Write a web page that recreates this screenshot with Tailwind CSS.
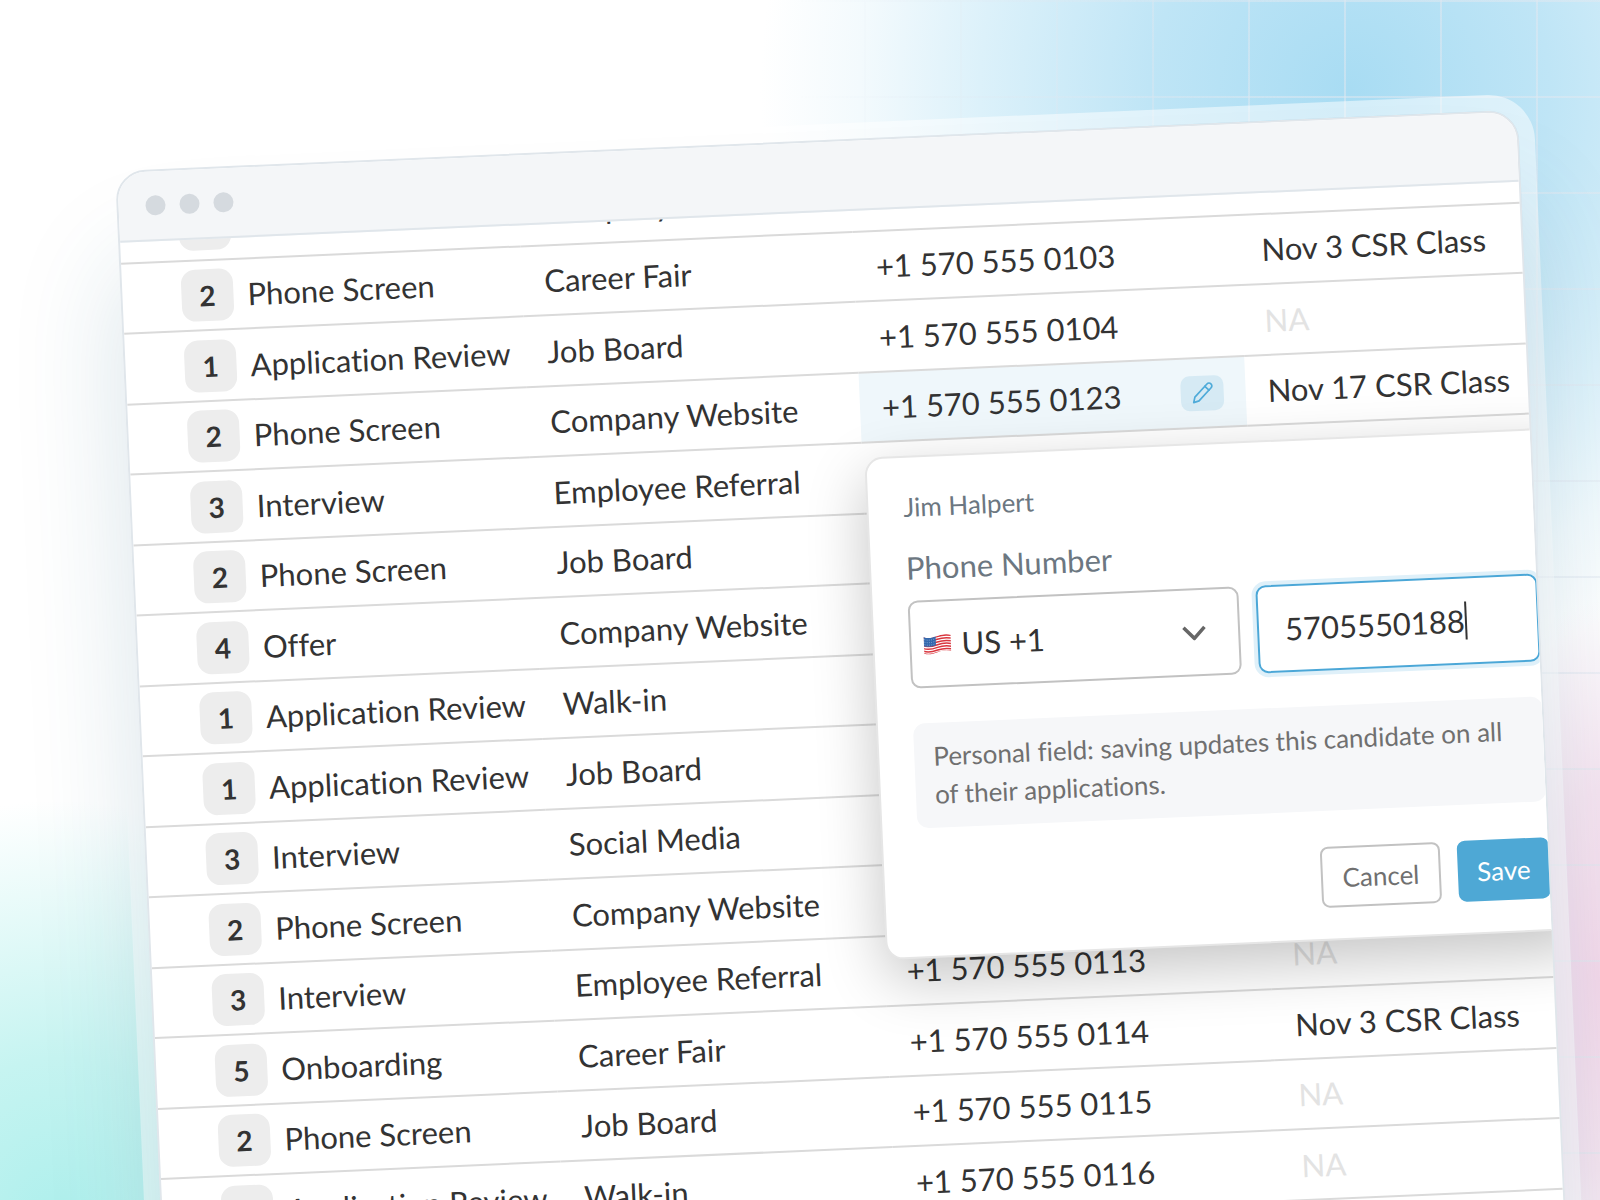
<!DOCTYPE html>
<html lang="en">
<head>
    <meta charset="utf-8">
    <meta name="viewport" content="width=device-width, initial-scale=1">
    <title>Candidates</title>
    <script src="https://cdn.jsdelivr.net/npm/@tailwindcss/browser@4"></script>
</head>
<body class="bg-white">
<div class="relative isolate h-screen overflow-hidden font-['Lato','Open_Sans',sans-serif] text-[31px] leading-[38px] text-[#333] [font-variant-ligatures:none]">
    <!-- backdrop -->
    <div class="absolute inset-0 -z-10 bg-[radial-gradient(circle_at_1350px_90px,#a8dcf3_0px,#bfe5f6_200px,#dcf1fa_370px,#f3fafd_490px,transparent_590px),radial-gradient(ellipse_150px_380px_at_100%_980px,#f5d9eb_0%,#f7e5f1_50%,transparent_100%),radial-gradient(ellipse_380px_430px_at_60px_1230px,#acefec_0%,#c6f4f1_40%,transparent_100%)]"></div>
    <div class="absolute inset-0 -z-10 bg-[linear-gradient(to_right,#e2e8f080_2px,transparent_2px),linear-gradient(to_bottom,#e2e8f080_2px,transparent_2px)] bg-size-[96px_96px] mask-[linear-gradient(to_right,transparent_50%,black_80%)]"></div>

    <!-- window -->
    <main class="mt-[171px] mr-[81px] ml-[115px] origin-top-left -rotate-[2.5deg] rounded-t-[30px] shadow-[0_96px_110px_#1f5f7a2b,0_0_0_16px_#ffffff80]">
        <div class="relative overflow-hidden rounded-t-[30px] border-2 border-[#e0e6eb] bg-white">
            <header class="relative z-10 flex h-[70px] items-center gap-[14px] border-b-2 border-[#e0e6eb] bg-[#f4f6f8] px-[27px]">
                <span class="size-5 rounded-full bg-[#d5dadf]"></span>
                <span class="size-5 rounded-full bg-[#d5dadf]"></span>
                <span class="size-5 rounded-full bg-[#d5dadf]"></span>
            </header>

            <table class="-mt-[50px] w-full table-fixed border-collapse text-left whitespace-nowrap [&_td]:px-[22px] [&_td]:py-0 [&_td:first-child]:pr-0 [&_td:first-child]:pl-[59px] [&_tr]:border-b-2 [&_tr]:border-[#dadada] [&_tr]:odd:h-[71px] [&_tr]:even:h-[70px]">
                <colgroup>
                    <col class="w-[400px]">
                    <col class="w-[332px]">
                    <col class="w-[386px]">
                    <col>
                </colgroup>
                <tbody>
                <tr>
                    <td><div class="flex items-center gap-[14px]"><span class="flex size-[52px] items-center justify-center rounded-[14px] bg-[#ededed] text-[28px] font-bold">2</span>Phone Screen</div></td>
                    <td>Company Website</td>
                    <td>+1 570 555 0102</td>
                    <td class="text-[#e3e3e3]">NA</td>
                </tr>
                <tr>
                    <td><div class="flex items-center gap-[14px]"><span class="flex size-[52px] items-center justify-center rounded-[14px] bg-[#ededed] text-[28px] font-bold">2</span>Phone Screen</div></td>
                    <td>Career Fair</td>
                    <td>+1 570 555 0103</td>
                    <td>Nov 3 CSR Class</td>
                </tr>
                <tr>
                    <td><div class="flex items-center gap-[14px]"><span class="flex size-[52px] items-center justify-center rounded-[14px] bg-[#ededed] text-[28px] font-bold">1</span>Application Review</div></td>
                    <td>Job Board</td>
                    <td>+1 570 555 0104</td>
                    <td class="text-[#e3e3e3]">NA</td>
                </tr>
                <tr>
                    <td><div class="flex items-center gap-[14px]"><span class="flex size-[52px] items-center justify-center rounded-[14px] bg-[#ededed] text-[28px] font-bold">2</span>Phone Screen</div></td>
                    <td>Company Website</td>
                    <td class="bg-[#eff7fb]">
                        <div class="flex items-center justify-between">
                            +1 570 555 0123
                            <button type="button" aria-label="Edit phone number" class="flex h-[35px] w-[43px] items-center justify-center rounded-[9px] bg-[#d6eaf4] text-[#4fabd9]">
                                <svg class="size-[22px]" viewBox="0 0 22 22" fill="none" stroke="currentColor" stroke-width="1.7" stroke-linejoin="round" stroke-linecap="round">
                                    <path d="M1.6 20.4 3 15 15.6 2.4a2.8 2.8 0 0 1 4 4L7 19z"/>
                                    <path d="m13.4 4.6 4 4"/>
                                </svg>
                            </button>
                        </div>
                    </td>
                    <td>Nov 17 CSR Class</td>
                </tr>
                <tr>
                    <td><div class="flex items-center gap-[14px]"><span class="flex size-[52px] items-center justify-center rounded-[14px] bg-[#ededed] text-[28px] font-bold">3</span>Interview</div></td>
                    <td>Employee Referral</td>
                    <td></td>
                    <td></td>
                </tr>
                <tr>
                    <td><div class="flex items-center gap-[14px]"><span class="flex size-[52px] items-center justify-center rounded-[14px] bg-[#ededed] text-[28px] font-bold">2</span>Phone Screen</div></td>
                    <td>Job Board</td>
                    <td></td>
                    <td></td>
                </tr>
                <tr>
                    <td><div class="flex items-center gap-[14px]"><span class="flex size-[52px] items-center justify-center rounded-[14px] bg-[#ededed] text-[28px] font-bold">4</span>Offer</div></td>
                    <td>Company Website</td>
                    <td></td>
                    <td></td>
                </tr>
                <tr>
                    <td><div class="flex items-center gap-[14px]"><span class="flex size-[52px] items-center justify-center rounded-[14px] bg-[#ededed] text-[28px] font-bold">1</span>Application Review</div></td>
                    <td>Walk-in</td>
                    <td></td>
                    <td></td>
                </tr>
                <tr>
                    <td><div class="flex items-center gap-[14px]"><span class="flex size-[52px] items-center justify-center rounded-[14px] bg-[#ededed] text-[28px] font-bold">1</span>Application Review</div></td>
                    <td>Job Board</td>
                    <td></td>
                    <td></td>
                </tr>
                <tr>
                    <td><div class="flex items-center gap-[14px]"><span class="flex size-[52px] items-center justify-center rounded-[14px] bg-[#ededed] text-[28px] font-bold">3</span>Interview</div></td>
                    <td>Social Media</td>
                    <td></td>
                    <td></td>
                </tr>
                <tr>
                    <td><div class="flex items-center gap-[14px]"><span class="flex size-[52px] items-center justify-center rounded-[14px] bg-[#ededed] text-[28px] font-bold">2</span>Phone Screen</div></td>
                    <td>Company Website</td>
                    <td></td>
                    <td></td>
                </tr>
                <tr>
                    <td><div class="flex items-center gap-[14px]"><span class="flex size-[52px] items-center justify-center rounded-[14px] bg-[#ededed] text-[28px] font-bold">3</span>Interview</div></td>
                    <td>Employee Referral</td>
                    <td>+1 570 555 0113</td>
                    <td class="text-[#e3e3e3]">NA</td>
                </tr>
                <tr>
                    <td><div class="flex items-center gap-[14px]"><span class="flex size-[52px] items-center justify-center rounded-[14px] bg-[#ededed] text-[28px] font-bold">5</span>Onboarding</div></td>
                    <td>Career Fair</td>
                    <td>+1 570 555 0114</td>
                    <td>Nov 3 CSR Class</td>
                </tr>
                <tr>
                    <td><div class="flex items-center gap-[14px]"><span class="flex size-[52px] items-center justify-center rounded-[14px] bg-[#ededed] text-[28px] font-bold">2</span>Phone Screen</div></td>
                    <td>Job Board</td>
                    <td>+1 570 555 0115</td>
                    <td class="text-[#e3e3e3]">NA</td>
                </tr>
                <tr>
                    <td><div class="flex items-center gap-[14px]"><span class="flex size-[52px] items-center justify-center rounded-[14px] bg-[#ededed] text-[28px] font-bold">1</span>Application Review</div></td>
                    <td>Walk-in</td>
                    <td>+1 570 555 0116</td>
                    <td class="text-[#e3e3e3]">NA</td>
                </tr>
                <tr>
                    <td></td>
                    <td></td>
                    <td></td>
                    <td></td>
                </tr>
                </tbody>
            </table>

            <!-- edit popover, hangs off the phone cell and is cut by the window edge -->
            <form class="absolute top-[317px] left-[734px] flex w-[704px] flex-col rounded-[18px] border-2 border-[#e6e6e6] bg-white px-[35px] pt-[30px] pb-[31px] shadow-[0_20px_60px_#0000003b]">
                <p class="text-[26px] text-[#6c7781]">Jim Halpert</p>
                <label for="phone" class="mt-[23px] text-[#6c7781]">Phone Number</label>
                <div class="mt-[14px] flex gap-[17px]">
                    <div class="flex h-[88px] w-[331px] items-center rounded-[10px] border-2 border-[#c2c2c2] pr-[32px] pl-[12px]">
                        <svg class="w-7 shrink-0" viewBox="0 0 28 21">
                            <clipPath id="flag"><path d="M.5 3C5 5 9 4 14 2.400S23 .5 27.500 1.500V18C23 16.500 19 17 14 18.600S5 21 .5 19.500z"/></clipPath>
                            <g clip-path="url(#flag)">
                                <path fill="#fff" d="M0 0h28v21H0z"/>
                                <path fill="none" stroke="#d9363e" stroke-width="1.500" d="M0 3.600c5 2 9 1 14-.6s9-1.600 14-.6M0 6.300c5 2 9 1 14-.6s9-1.600 14-.6M0 9c5 2 9 1 14-.6s9-1.600 14-.6M0 11.700c5 2 9 1 14-.6s9-1.600 14-.6M0 14.400c5 2 9 1 14-.6s9-1.600 14-.6M0 17.100c5 2 9 1 14-.6s9-1.600 14-.6M0 19.500c5 2 9 1 14-.6s9-1.600 14-.6"/>
                                <path fill="#3468ad" d="M0 2c5 2 8 1.500 12.500 0v9.600C8 13 5 13.500 0 12z"/>
                                <path fill="none" stroke="#9db9dc" stroke-width=".7" stroke-dasharray="1 1.300" d="M1 5.500c4 1.300 7 .8 11-.4M1 8c4 1.300 7 .8 11-.4M1 10.500c4 1.300 7 .8 11-.4"/>
                            </g>
                        </svg>
                        <select aria-label="Country code" class="ml-[10px] flex-1 appearance-none bg-transparent outline-none">
                            <option>US +1</option>
                        </select>
                        <svg class="h-4 w-6" viewBox="0 0 24 16" fill="none" stroke="#666" stroke-width="3.5"><path d="m1.500 3 10.500 11L22.500 3"/></svg>
                    </div>
                    <div class="flex flex-1 items-center rounded-[10px] border-2 border-[#4ba7d7] pl-[26px] shadow-[0_0_0_4px_#dff0f9]">
                        <input id="phone" type="tel" value="5705550188" class="field-sizing-content outline-none">
                        <span class="h-[38px] w-[2px] bg-[#333]"></span>
                    </div>
                </div>
                <p class="mt-[35px] rounded-[12px] bg-[#f6f7f9] px-[19px] pt-[14px] pb-[15px] text-[26px] text-[#707070]">Personal field: saving updates this candidate on all of their applications.</p>
                <div class="mt-[36px] flex justify-end gap-[17px] text-[26px]">
                    <button type="button" class="h-[61px] w-[120px] rounded-[8px] border-2 border-[#c2c2c2] text-[#707070]">Cancel</button>
                    <button type="submit" class="h-[61px] w-[92px] rounded-[8px] bg-[#4ea8d5] text-white">Save</button>
                </div>
            </form>
        </div>
    </main>
</div>
</body>
</html>
